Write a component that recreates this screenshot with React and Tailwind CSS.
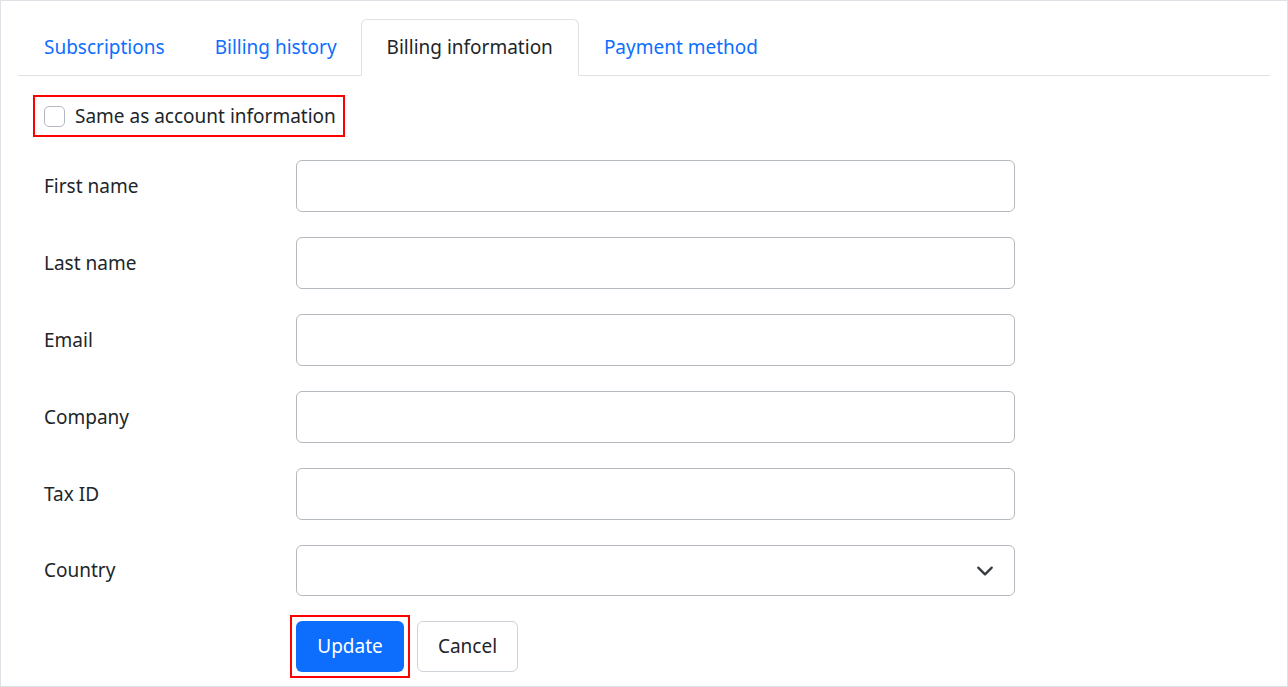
export default function App() {
  const fields = ["First name", "Last name", "Email", "Company", "Tax ID"];
  return (
    <div className="w-[1288px] h-[687px] bg-white border border-[#dee2e6] pt-[18px] px-[17px] text-[#212529] text-[19px] overflow-hidden" style={{ fontFamily: '"Noto Sans", sans-serif' }}>
      <div className="flex border-b border-[#dee2e6] h-[57px]">
        <div className="px-[26px] flex items-center text-[#0d6efd]">Subscriptions</div>
        <div className="px-[24px] flex items-center text-[#0d6efd]">Billing history</div>
        <div className="px-[25px] flex items-center border border-[#dee2e6] border-b-white rounded-t-[6px] mb-[-1px] bg-white">Billing information</div>
        <div className="px-[25px] flex items-center text-[#0d6efd]">Payment method</div>
      </div>
      <div className="mt-[19px] ml-[15px] inline-flex items-center gap-[10px] border-2 border-[#ff0000] h-[42px] pl-[9px] pr-[7px]">
        <span className="w-[21px] h-[21px] border border-[#b4b9bf] rounded-[5px] bg-white"></span>
        <span>Same as account information</span>
      </div>
      <div className="mt-[23px] flex flex-col gap-[25px]">
        {fields.map((f) => (
          <div key={f} className="flex items-center">
            <div className="w-[278px] pl-[26px]">{f}</div>
            <div className="w-[719px] h-[52px] border border-[#b4b9bf] rounded-[6px]"></div>
          </div>
        ))}
        <div className="flex items-center">
          <div className="w-[278px] pl-[26px]">Country</div>
          <div className="w-[719px] h-[51px] border border-[#b4b9bf] rounded-[6px] flex items-center justify-end pr-[20px]">
            <svg width="18" height="18" viewBox="0 0 16 16" fill="none" stroke="#343a40" strokeWidth="2" strokeLinecap="round" strokeLinejoin="round"><path d="M2 5l6 6 6-6" /></svg>
          </div>
        </div>
      </div>
      <div className="mt-[19px] ml-[272px] flex items-center gap-[7px]">
        <div className="border-2 border-[#ff0000] p-[4px]">
          <div className="w-[108px] h-[51px] bg-[#0d6efd] text-white rounded-[6px] flex items-center justify-center">Update</div>
        </div>
        <div className="w-[101px] h-[51px] border border-[#ced4da] rounded-[6px] flex items-center justify-center">Cancel</div>
      </div>
    </div>
  );
}
